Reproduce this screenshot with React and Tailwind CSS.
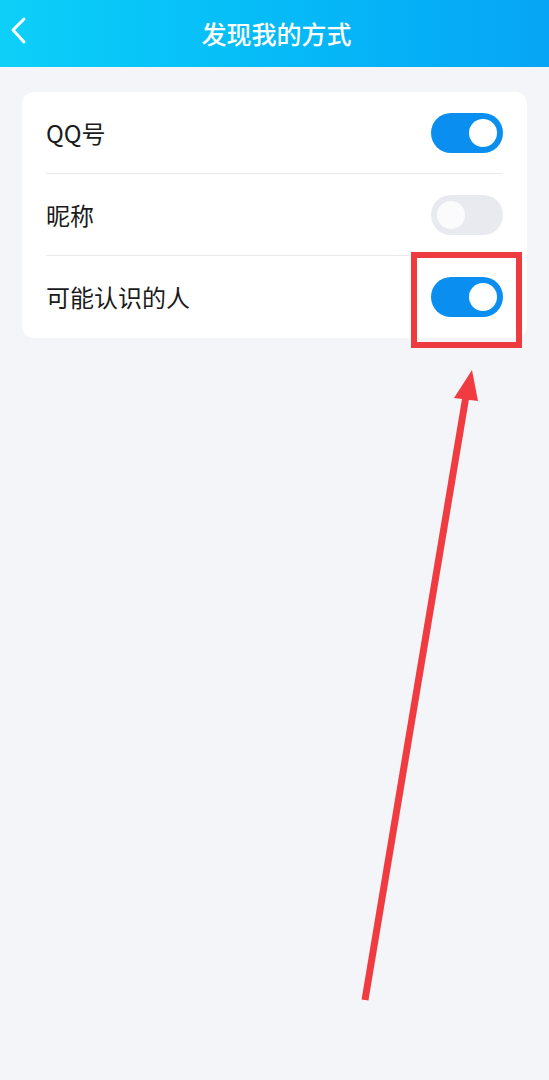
import { useState } from 'react'

function Toggle({ on, onChange }) {
  return (
    <button
      type="button"
      onClick={onChange}
      className={`w-[72px] h-[40px] rounded-full flex items-center px-[6px] transition-colors ${
        on ? 'bg-[#0a8ff0] justify-end' : 'bg-[#e9eaf0] justify-start'
      }`}
    >
      <span className={`w-[28px] h-[28px] rounded-full ${on ? 'bg-white' : 'bg-[#fbfbfd]'}`} />
    </button>
  )
}

function Row({ label, on, onChange, last, highlight }) {
  return (
    <div className="pl-[24px] pr-[24px]">
      <div className={`h-[82px] flex items-center justify-between ${last ? '' : 'border-b border-[#e8e9ee]'}`}>
        <span className="text-[24px] text-[#1b1b1b] leading-none">{label}</span>
        <div className="relative">
          <Toggle on={on} onChange={onChange} />
          {highlight && (
            <div className="absolute left-[-20px] top-[-25px] w-[111px] h-[96px] border-[6px] border-[#ee3b3f] pointer-events-none" />
          )}
        </div>
      </div>
    </div>
  )
}

export default function App() {
  const [qq, setQq] = useState(true)
  const [nick, setNick] = useState(false)
  const [maybe, setMaybe] = useState(true)

  return (
    <div
      className="relative w-[549px] h-[1080px] bg-[#f4f5f9] overflow-hidden"
      style={{ fontFamily: '"Noto Sans CJK SC", "Noto Sans", sans-serif' }}
    >
      <header className="relative h-[67px] bg-gradient-to-r from-[#0dd0f9] to-[#07a5f5] flex items-center justify-center">
        <button type="button" className="absolute left-[10px] top-[16px] w-[20px] h-[30px]">
          <svg viewBox="0 0 20 30" className="w-full h-full" fill="none" stroke="white" strokeWidth="3" strokeLinecap="round" strokeLinejoin="round">
            <path d="M14 3 L3 14 L14 26" />
          </svg>
        </button>
        <h1 className="text-white text-[25px] font-medium leading-none ml-[4px]">发现我的方式</h1>
      </header>

      <div className="px-[22px] pt-[25px]">
        <div className="bg-white rounded-[12px]">
          <Row label="QQ号" on={qq} onChange={() => setQq(!qq)} />
          <Row label="昵称" on={nick} onChange={() => setNick(!nick)} />
          <Row label="可能认识的人" on={maybe} onChange={() => setMaybe(!maybe)} last highlight />
        </div>
      </div>

      {/* pointer arrow up to the last switch */}
      <svg className="absolute left-0 top-0 pointer-events-none" width="549" height="1080" viewBox="0 0 549 1080">
        <line x1="365" y1="1000" x2="466" y2="396" stroke="#f03c40" strokeWidth="7" />
        <polygon points="472,370 454,398 478,401" fill="#f03c40" />
      </svg>
    </div>
  )
}
